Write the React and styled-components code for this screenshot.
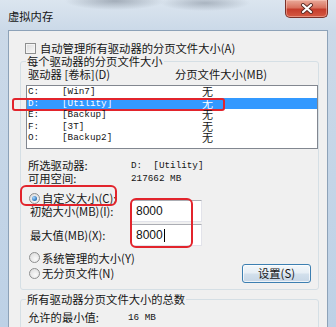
import React from 'react';
import styled, { createGlobalStyle } from 'styled-components';

const cjk = `"Noto Sans CJK SC", "Noto Sans", sans-serif`;
const mono = `"Liberation Mono", "Noto Sans CJK SC", monospace`;

const GlobalStyle = createGlobalStyle`
  html, body { margin: 0; padding: 0; }
  body { width: 336px; height: 327px; overflow: hidden; background: #bdd1e6; }
`;

const Window = styled.div`
  width: 336px;
  height: 327px;
  overflow: hidden;
  display: flex;
  flex-direction: column;
  background:
    radial-gradient(ellipse 50px 9px at 115px 1px, rgba(80, 90, 105, 0.4), transparent),
    radial-gradient(ellipse 45px 8px at 205px 3px, rgba(80, 90, 105, 0.35), transparent),
    linear-gradient(180deg, #dbe5ef 0%, #cbd9e8 30px, #bdd1e6 100%);
  font-family: ${cjk};
  color: #151515;
`;

const TitleBar = styled.div`
  height: 30px;
  flex: none;
  display: flex;
  align-items: flex-start;
  padding-left: 8px;
`;

const Title = styled.span`
  margin-top: 9px;
  font-size: 11.3px;
  line-height: 14px;
`;

const CloseButton = styled.div`
  margin-left: auto;
  margin-right: 8px;
  width: 43px;
  height: 18px;
  box-sizing: border-box;
  border: 1px solid #7a3129;
  border-top: none;
  border-radius: 0 0 5px 5px;
  background: linear-gradient(180deg, #e9aa9a 0%, #d9725f 45%, #c53d2c 55%, #d55a43 100%);
  box-shadow: inset 0 0 0 1px rgba(255, 210, 200, 0.45);
  display: flex;
  align-items: center;
  justify-content: center;
`;

const Client = styled.div`
  flex: 1;
  margin: 0 8px;
  border: 1px solid #8da2b8;
  border-bottom: none;
  background: #f0f0f0;
  padding: 10px 8px 0 11px;
  display: flex;
  flex-direction: column;
  font-size: 11.3px;
`;

const CheckRow = styled.label`
  display: flex;
  align-items: center;
  gap: 4px;
  height: 14px;
  line-height: 14px;
  padding-left: 5px;
`;

const CheckBox = styled.span`
  width: 11px;
  height: 11px;
  box-sizing: border-box;
  border: 1px solid #8e8f8f;
  background: linear-gradient(135deg, #dcdcdc, #f8f8f8);
  box-shadow: inset 0 0 0 1px #f4f4f4;
`;

const Group = styled.fieldset`
  margin: 0;
  padding: 0 0 ${(p) => p.$bottom}px 5px;
  border: 1px solid #d5dfe5;
  border-radius: 3px;
  min-width: 0;
  & + & {
    margin-top: 3px;
  }
`;

const Legend = styled.legend`
  margin: 0;
  padding: 0 1px;
  font-size: 11.3px;
  line-height: 13px;
`;

const HeaderRow = styled.div`
  display: grid;
  grid-template-columns: 147px 1fr;
  padding-left: 2px;
  line-height: 12px;
`;

const ListBox = styled.div`
  margin-top: 5px;
  height: 64px;
  box-sizing: border-box;
  border: 1px solid #828790;
  background: #fff;
`;

const ListRow = styled.div`
  position: relative;
  display: grid;
  grid-template-columns: 34px 140px 1fr;
  align-items: center;
  height: 11.5px;
  padding-left: 1px;
  background: ${(p) => (p.$selected ? '#3399ff' : 'transparent')};
  color: ${(p) => (p.$selected ? '#fff' : '#151515')};
`;

const Mono = styled.span`
  font-family: ${mono};
  font-size: 9.3px;
  line-height: 11px;
  white-space: pre;
`;

const Cjk = styled.span`
  font-size: 11px;
  line-height: 11px;
`;

const InfoGrid = styled.div`
  display: grid;
  grid-template-columns: ${(p) => p.$col}px 1fr;
  align-items: center;
  margin-top: ${(p) => p.$top}px;
  padding-left: 2px;
  line-height: 13px;
`;

const RadioRow = styled.label`
  position: relative;
  display: flex;
  align-items: center;
  gap: 2px;
  height: ${(p) => p.$h}px;
  padding-left: 3px;
  margin-top: ${(p) => p.$top || 0}px;
`;

const Radio = styled.span`
  position: relative;
  width: 11px;
  height: 11px;
  box-sizing: border-box;
  border-radius: 50%;
  border: 1px solid #8e8f8f;
  background: radial-gradient(circle at 60% 65%, #fafafa, #d8d8d8);
  &::after {
    content: '';
    display: ${(p) => (p.$checked ? 'block' : 'none')};
    position: absolute;
    left: 2px;
    top: 2px;
    width: 5px;
    height: 5px;
    border-radius: 50%;
    background: radial-gradient(circle at 35% 35%, #a8d8ff, #2a72b8 70%);
  }
`;

const SizeGrid = styled.div`
  position: relative;
  display: grid;
  grid-template-columns: 101px 71px;
  grid-auto-rows: 22px;
  row-gap: 2px;
  align-items: center;
  margin-top: -5px;
  padding-left: 4px;
`;

const TextBox = styled.div`
  height: 22px;
  box-sizing: border-box;
  border: 1px solid #e2e3ea;
  border-top-color: #abadb3;
  background: #fff;
  padding-left: 4px;
  display: flex;
  align-items: center;
  font-family: "Liberation Sans", Arial, sans-serif;
  font-size: 12px;
  color: #111;
`;

const Caret = styled.span`
  width: 1px;
  height: 13px;
  background: #000;
  margin-left: 1px;
`;

const Button = styled.button`
  margin-left: auto;
  margin-right: 7px;
  width: 69px;
  height: 19px;
  padding: 0;
  border: 1px solid #3c7fb1;
  border-radius: 3px;
  background: linear-gradient(180deg, #f3f7fa 0%, #e6eef5 48%, #d3e0ec 52%, #c6d6e6 100%);
  box-shadow: inset 0 0 0 1px rgba(255, 255, 255, 0.7);
  font-family: ${cjk};
  font-size: 11.3px;
  line-height: 17px;
  color: #151515;
`;

const Mark = styled.span`
  position: absolute;
  left: ${(p) => p.$x}px;
  top: ${(p) => p.$y}px;
  width: ${(p) => p.$w}px;
  height: ${(p) => p.$h}px;
  box-sizing: border-box;
  border: 2px solid #e2242c;
  border-radius: ${(p) => p.$r}px;
  pointer-events: none;
`;

const drives = [
  { letter: 'C:', label: '[Win7]' },
  { letter: 'D:', label: '[Utility]', selected: true },
  { letter: 'E:', label: '[Backup]' },
  { letter: 'F:', label: '[3T]' },
  { letter: 'O:', label: '[Backup2]' },
];

const CloseGlyph = () => (
  <svg width="14" height="11" viewBox="0 0 14 11">
    <path d="M3 2 L11 9 M11 2 L3 9" stroke="#5a2a24" strokeWidth="4" strokeLinecap="round" />
    <path d="M3 2 L11 9 M11 2 L3 9" stroke="#fff" strokeWidth="2.2" strokeLinecap="round" />
  </svg>
);

export default function App() {
  return (
    <>
      <GlobalStyle />
      <Window>
        <TitleBar>
          <Title>虚拟内存</Title>
          <CloseButton>
            <CloseGlyph />
          </CloseButton>
        </TitleBar>
        <Client>
          <CheckRow>
            <CheckBox />
            自动管理所有驱动器的分页文件大小(A)
          </CheckRow>
          <Group $bottom={8}>
            <Legend>每个驱动器的分页文件大小</Legend>
            <HeaderRow>
              <span>驱动器 [卷标](D)</span>
              <span>分页文件大小(MB)</span>
            </HeaderRow>
            <ListBox>
              {drives.map((d) => (
                <ListRow key={d.letter} $selected={d.selected}>
                  <Mono>{d.letter}</Mono>
                  <Mono>{d.label}</Mono>
                  <Cjk>无</Cjk>
                  {d.selected && <Mark $x={-15} $y={0} $w={213} $h={13} $r={3} />}
                </ListRow>
              ))}
            </ListBox>
            <InfoGrid $col={103} $top={10}>
              <span>所选驱动器:</span>
              <Mono>D:  [Utility]</Mono>
              <span>可用空间:</span>
              <Mono>217662 MB</Mono>
            </InfoGrid>
            <RadioRow $h={14} $top={6}>
              <Radio $checked />
              自定义大小(C):
              <Mark $x={-6} $y={-6} $w={97} $h={21} $r={6} />
            </RadioRow>
            <SizeGrid>
              <span>初始大小(MB)(I):</span>
              <TextBox>8000</TextBox>
              <span>最大值(MB)(X):</span>
              <TextBox>
                8000
                <Caret />
              </TextBox>
              <Mark $x={104} $y={-2} $w={63} $h={50} $r={6} />
            </SizeGrid>
            <RadioRow $h={15} $top={4}>
              <Radio />
              系统管理的大小(Y)
            </RadioRow>
            <RadioRow $h={16}>
              <Radio />
              无分页文件(N)
              <Button>设置(S)</Button>
            </RadioRow>
          </Group>
          <Group $bottom={20}>
            <Legend>所有驱动器分页文件大小的总数</Legend>
            <InfoGrid $col={100} $top={5}>
              <span>允许的最小值:</span>
              <Mono>16 MB</Mono>
            </InfoGrid>
          </Group>
        </Client>
      </Window>
    </>
  );
}
